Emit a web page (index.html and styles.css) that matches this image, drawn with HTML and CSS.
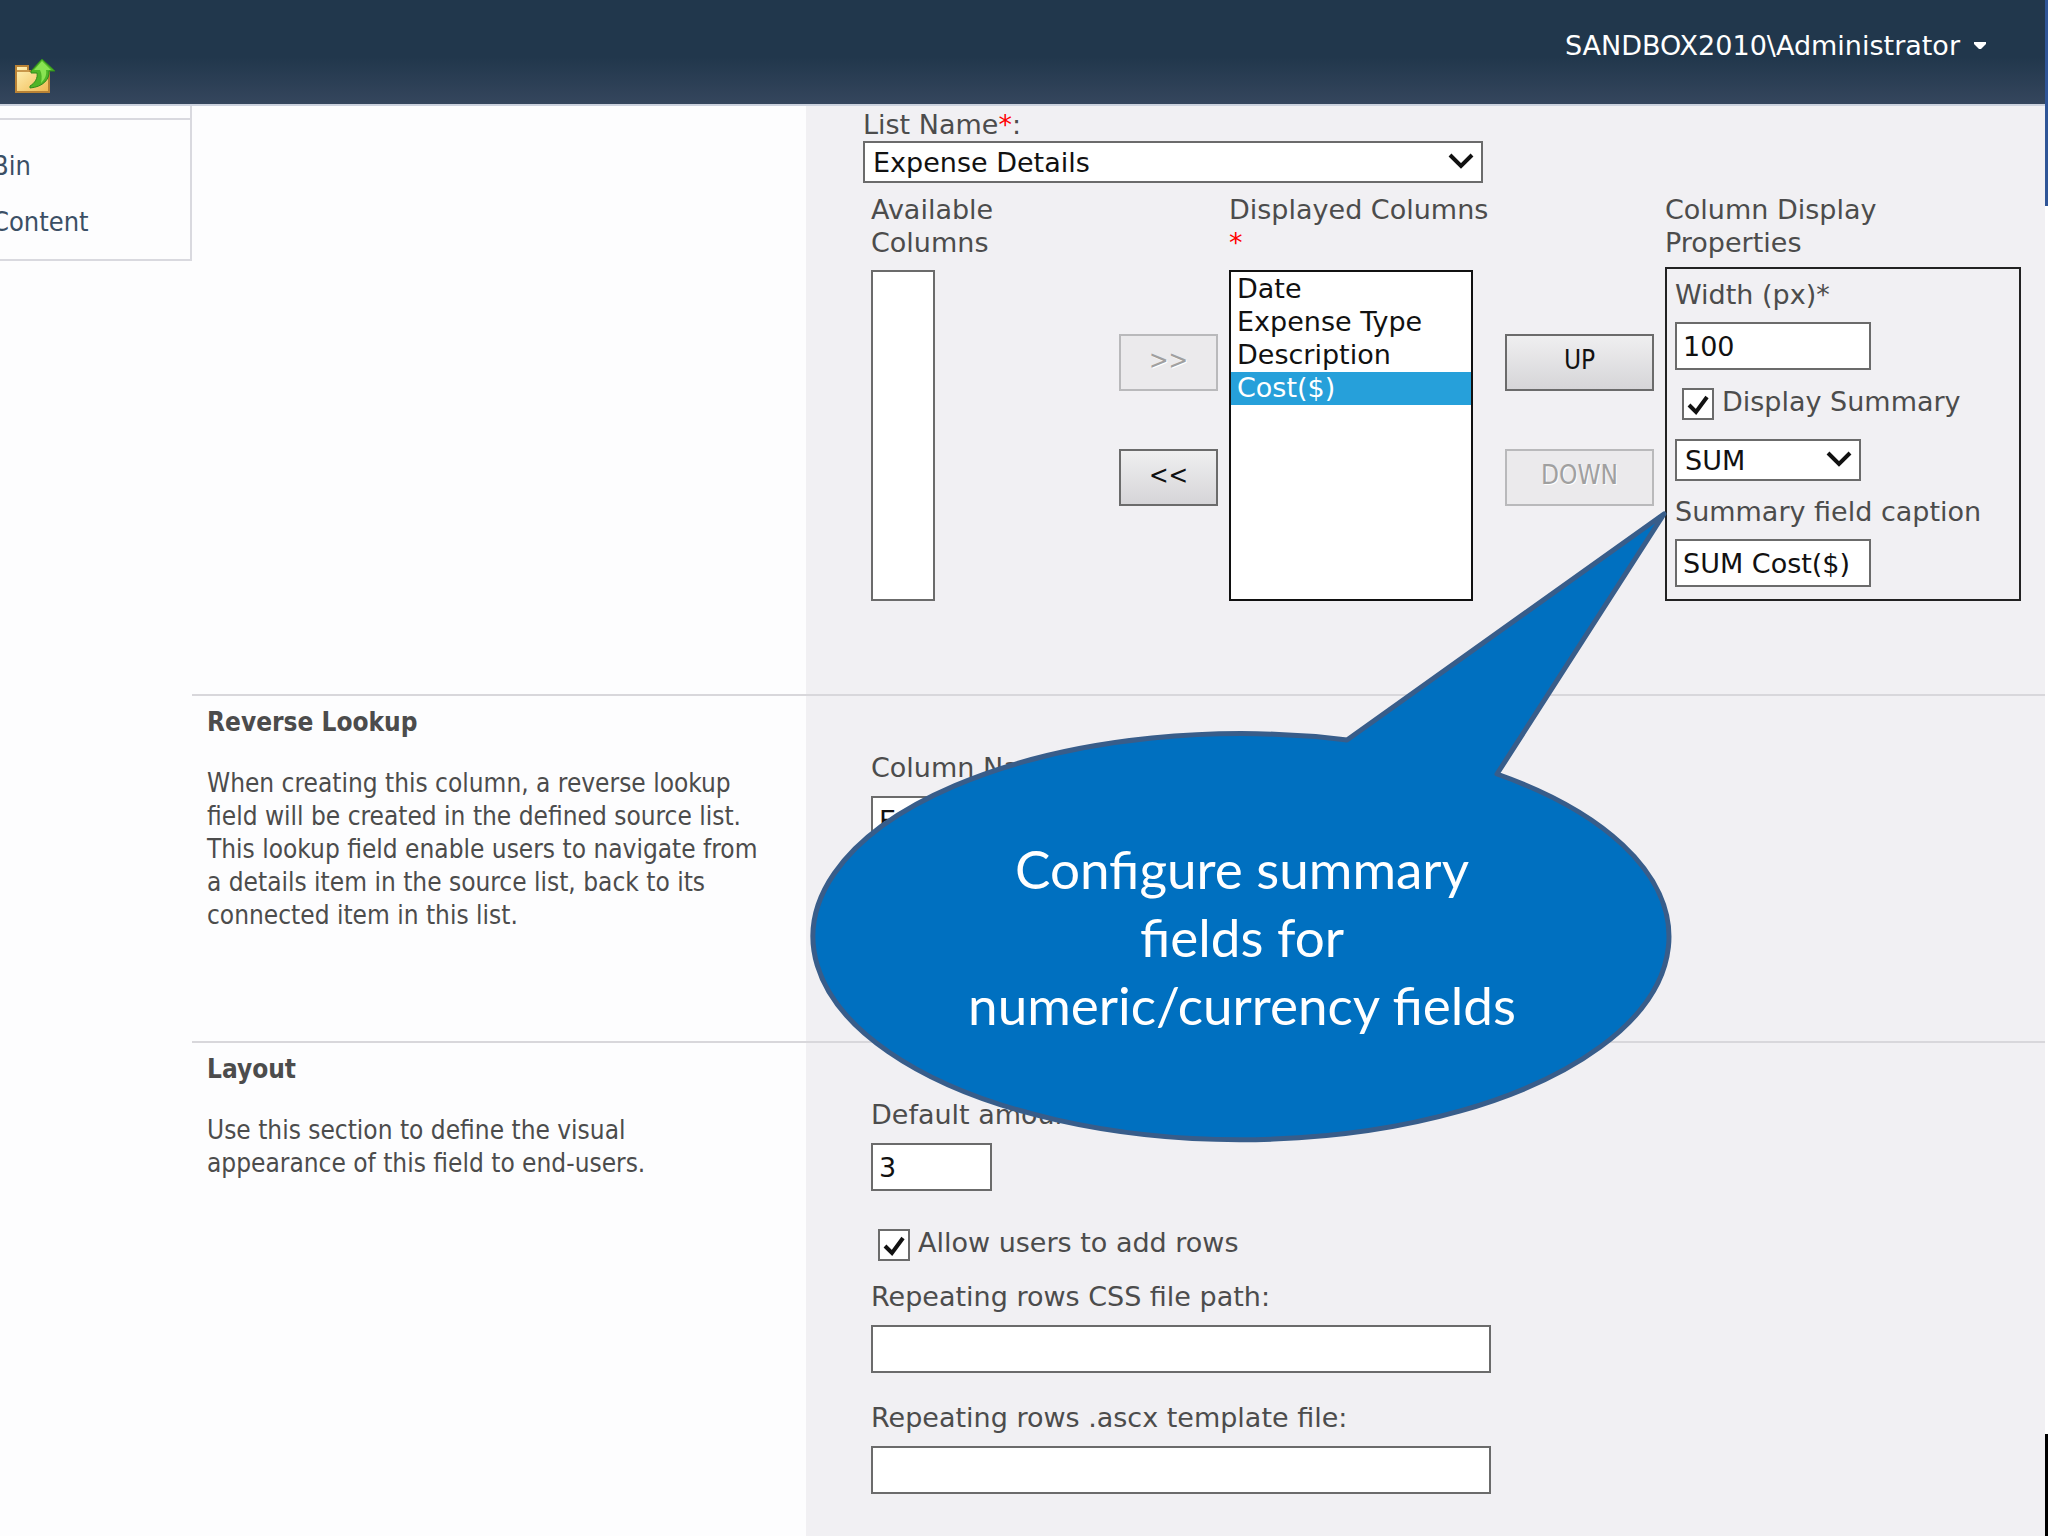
FILE: index.html
```
<!DOCTYPE html>
<html lang="en">
<head>
    <meta charset="UTF-8">
    <meta name="viewport" content="width=device-width, initial-scale=1.0">
    <title>Column Settings</title>
    <link rel="stylesheet" href="styles.css">
</head>
<body>
    <div class="screen">
        <header class="ribbon">
            <a href="#" class="navigate-up" aria-label="Navigate Up">
                <svg width="42" height="38" viewBox="0 0 42 38">
                    <defs>
                        <linearGradient id="folder" x1="0" y1="0" x2="1" y2="1">
                            <stop offset="0" stop-color="#fff3b8"/>
                            <stop offset="1" stop-color="#f0b850"/>
                        </linearGradient>
                    </defs>
                    <path d="M2 34V8h12v5h21v21z" fill="url(#folder)" stroke="#b98235" stroke-width="2"/>
                    <path d="M3 13h12" stroke="#c9974a" stroke-width="2"/>
                    <path d="M28 1L41 13h-6c1 8-6 16-19 17v-2c5-3 8-8 7-13h-6v-2z" fill="#4fb527" stroke="#2f8a1c" stroke-width="1"/>
                    <path d="M28 3L37 12h-5c1 5-1 9-5 13c1-5 1-9-1-13h-6z" fill="#8ae352"/>
                </svg>
            </a>
            <button type="button" class="user-menu">SANDBOX2010\Administrator
                <svg width="12" height="7" viewBox="0 0 12 7"><path d="M0 0h12v2L7 7H5L0 2z" fill="#fff"/></svg>
            </button>
        </header>

        <div class="page">
            <nav class="quick-launch">
                <ul>
                    <li><a href="#">Bin</a></li>
                    <li><a href="#">Content</a></li>
                </ul>
            </nav>

            <form class="settings">
                <section class="section">
                    <div class="description"></div>
                    <div class="controls controls-list">
                        <label for="listName">List Name<span class="required">*</span>:</label>
                        <select id="listName" class="dropdown wide">
                            <option>Expense Details</option>
                        </select>

                        <div class="columns">
                            <label for="available" class="available-label">Available Columns</label>
                            <span></span>
                            <label for="displayed">Displayed Columns <span class="required">*</span></label>
                            <span></span>
                            <span class="properties-label" id="propertiesLabel">Column Display Properties</span>

                            <select id="available" class="listbox listbox-empty" size="10"></select>
                            <div class="buttons">
                                <button type="button" disabled>&gt;&gt;</button>
                                <button type="button">&lt;&lt;</button>
                            </div>
                            <select id="displayed" class="listbox listbox-active" size="10">
                                <option>Date</option>
                                <option>Expense Type</option>
                                <option>Description</option>
                                <option selected>Cost($)</option>
                            </select>
                            <div class="buttons order-buttons">
                                <button type="button">UP</button>
                                <button type="button" disabled>DOWN</button>
                            </div>
                            <div class="properties" role="group" aria-labelledby="propertiesLabel">
                                <label for="width">Width (px)*</label>
                                <input type="text" id="width" class="textbox" value="100">
                                <div class="check">
                                    <input type="checkbox" id="summary" checked>
                                    <label for="summary">Display Summary</label>
                                </div>
                                <select id="function" class="dropdown" aria-label="Summary function">
                                    <option>SUM</option>
                                </select>
                                <label for="caption" class="caption-label">Summary field caption</label>
                                <input type="text" id="caption" class="textbox" value="SUM Cost($)">
                            </div>
                        </div>
                    </div>
                </section>

                <section class="section">
                    <div class="description">
                        <h2>Reverse Lookup</h2>
                        <p>When creating this column, a reverse lookup field will be created in the defined source list. This lookup field enable users to navigate from a details item in the source list, back to its connected item in this list.</p>
                    </div>
                    <div class="controls">
                        <label for="columnName">Column Name:</label>
                        <input type="text" id="columnName" class="textbox wide" value="Expense">
                    </div>
                </section>

                <section class="section">
                    <div class="description">
                        <h2>Layout</h2>
                        <p>Use this section to define the visual appearance of this field to end-users.</p>
                    </div>
                    <div class="controls">
                        <label for="rows">Default amount of rows:</label>
                        <input type="text" id="rows" class="textbox short" value="3">
                        <div class="check">
                            <input type="checkbox" id="addRows" checked>
                            <label for="addRows">Allow users to add rows</label>
                        </div>
                        <label for="cssPath">Repeating rows CSS file path:</label>
                        <input type="text" id="cssPath" class="textbox wide">
                        <label for="template" class="template-label">Repeating rows .ascx template file:</label>
                        <input type="text" id="template" class="textbox wide">
                    </div>
                </section>
            </form>
        </div>
    </div>
    <div class="edge"></div>

    <div class="callout">
        <svg viewBox="0 0 864 636">
            <path d="M537 231L854 5L687 265A428 203 0 1 1 537 231Z" fill="#0070c0" stroke="#385d8a" stroke-width="5" stroke-linejoin="round"/>
        </svg>
        <p>Configure summary<br>fields for<br>numeric/currency fields</p>
    </div>
</body>
</html>
```
FILE: styles.css
```
* {
    box-sizing: border-box;
}
body {
    display: flex;
    position: relative;
    min-height: 100vh;
    margin: 0;
    overflow: hidden;
    background: #fdfdfe;
    color: #4c4c4c;
    font-family: "DejaVu Sans", sans-serif;
    font-size: 27px;
    line-height: 33px;
}
input, select, button {
    color: #111;
    font: inherit;
}
.screen {
    display: flex;
    flex: 1;
    flex-direction: column;
}

/* dark strip at the window's right side */
.edge {
    width: 3px;
    background: linear-gradient(#2f5597 206px, #fff 206px, #fff 1434px, #000 1434px);
}

/* header */
.ribbon {
    display: flex;
    justify-content: space-between;
    height: 106px;
    padding: 0 59px 0 14px;
    border-bottom: 2px solid #ccd2de;
    background: linear-gradient(#21374c 55%, #35465d);
}
.navigate-up {
    align-self: flex-end;
    height: 46px;
}
.user-menu {
    display: flex;
    align-items: center;
    gap: 14px;
    height: 91px;
    padding: 0;
    border: none;
    background: none;
    color: #fff;
    cursor: pointer;
}

/* left navigation */
.page {
    display: flex;
    flex: 1;
}
.quick-launch {
    width: 192px;
    overflow: hidden;
    font-family: "DejaVu Sans Condensed", "DejaVu Sans", sans-serif;
}
.quick-launch ul {
    height: 155px;
    margin: 0;
    padding: 12px 0 0;
    border-right: 2px solid #d9d9df;
    border-bottom: 2px solid #d9d9df;
    list-style: none;
}
.quick-launch li {
    padding-top: 23px;
    text-indent: -8px;
}
.quick-launch li:first-child {
    padding-top: 29px;
    border-top: 2px solid #d9d9df;
}
.quick-launch a {
    color: #3b4f65;
    text-decoration: none;
}

/* form sections */
.settings {
    display: flex;
    flex: 1;
    flex-direction: column;
}
.section {
    display: grid;
    grid-template-columns: 614px 1fr;
    min-height: 347px;
}
.section + .section {
    border-top: 2px solid #d8d7db;
}
.section:last-child {
    flex: 1;
}
.description {
    padding: 10px 40px 0 15px;
    font-family: "DejaVu Sans Condensed", "DejaVu Sans", sans-serif;
    font-size: 26px;
}
.description h2 {
    margin: 0 0 28px;
    font-size: 26px;
}
.description p {
    margin: 0;
}
.controls {
    padding: 55px 24px 0 65px;
    background: #f1f0f3;
}
.controls-list {
    padding: 2px 24px 93px 57px;
}
.controls label {
    display: block;
}
.required {
    color: #f00;
}

/* fields */
.textbox {
    display: block;
    width: 196px;
    height: 48px;
    margin-top: 12px;
    padding: 0 6px;
    border: 2px solid #6b6b6b;
    background: #fff;
}
.dropdown {
    display: block;
    appearance: none;
    width: 186px;
    height: 42px;
    padding: 0 8px;
    border: 2px solid #6b6b6b;
    border-radius: 0;
    background: #fff url("data:image/svg+xml,%3Csvg xmlns='http://www.w3.org/2000/svg' width='26' height='18' viewBox='0 0 26 18'%3E%3Cpath d='M2 2l11 11L24 2' fill='none' stroke='%23111' stroke-width='4'/%3E%3C/svg%3E") no-repeat right 7px center;
}
.wide {
    width: 620px;
}
.short {
    width: 121px;
}
.check {
    display: flex;
    align-items: flex-start;
    gap: 8px;
    height: 33px;
    margin: 18px 0;
    padding-left: 7px;
}
.check label {
    line-height: 28px;
}
.short + .check {
    margin-top: 38px;
}
.check input {
    appearance: none;
    width: 32px;
    height: 32px;
    margin: 0;
    border: 2px solid #6b6b6b;
    background: #fff;
}
.check input:checked {
    background: #fff url("data:image/svg+xml,%3Csvg xmlns='http://www.w3.org/2000/svg' width='24' height='24' viewBox='0 0 24 24'%3E%3Cpath d='M3 13l7 7L21 5' fill='none' stroke='%23111' stroke-width='4'/%3E%3C/svg%3E") no-repeat center;
}
.template-label {
    margin-top: 28px;
}

/* column picker */
.columns {
    display: grid;
    grid-template-columns: 248px 110px 276px 160px 356px;
    row-gap: 8px;
    align-items: end;
    margin-top: 10px;
    padding-left: 8px;
}
.available-label {
    width: 160px;
}
.columns > label, .properties-label {
    align-self: start;
}
.properties-label {
    width: 260px;
}
.listbox {
    width: 244px;
    height: 331px;
    padding: 1px 0 0;
    border: 2px solid #6b6b6b;
    border-radius: 0;
    background: #fff;
    overflow: hidden;
}
.listbox-empty {
    width: 64px;
}
.listbox-active {
    border-color: #111;
}
.listbox option {
    height: 33px;
    padding: 0 6px;
}
.listbox option:checked {
    background: #26a0da linear-gradient(#26a0da, #26a0da);
    color: #fff;
}
.buttons {
    display: flex;
    flex-direction: column;
    gap: 58px;
    width: 99px;
    padding-bottom: 95px;
    font-family: "DejaVu Sans Condensed", "DejaVu Sans", sans-serif;
    font-size: 26px;
}
.order-buttons {
    width: 149px;
}
.buttons button {
    height: 57px;
    padding: 0 0 4px;
    border: 2px solid #6b6b6b;
    background: linear-gradient(#efeff0, #d6d5d8);
}
.buttons button:disabled {
    border-color: #b9b9bb;
    background: #ebeaec;
    color: #a0a0a0;
    text-shadow: 1px 1px #fff;
}
.properties {
    padding: 9px 8px 12px;
    border: 2px solid #222;
}
.properties .textbox {
    margin-top: 11px;
}
.properties .caption-label {
    margin-top: 14px;
}

/* speech bubble over the form */
.callout {
    position: absolute;
    top: 509px;
    left: 810px;
    width: 864px;
    height: 636px;
}
.callout p {
    position: absolute;
    top: 326px;
    left: 0;
    width: 100%;
    margin: 0;
    color: #fff;
    font-family: Lato, sans-serif;
    font-size: 53px;
    line-height: 68px;
    text-align: center;
}
```
